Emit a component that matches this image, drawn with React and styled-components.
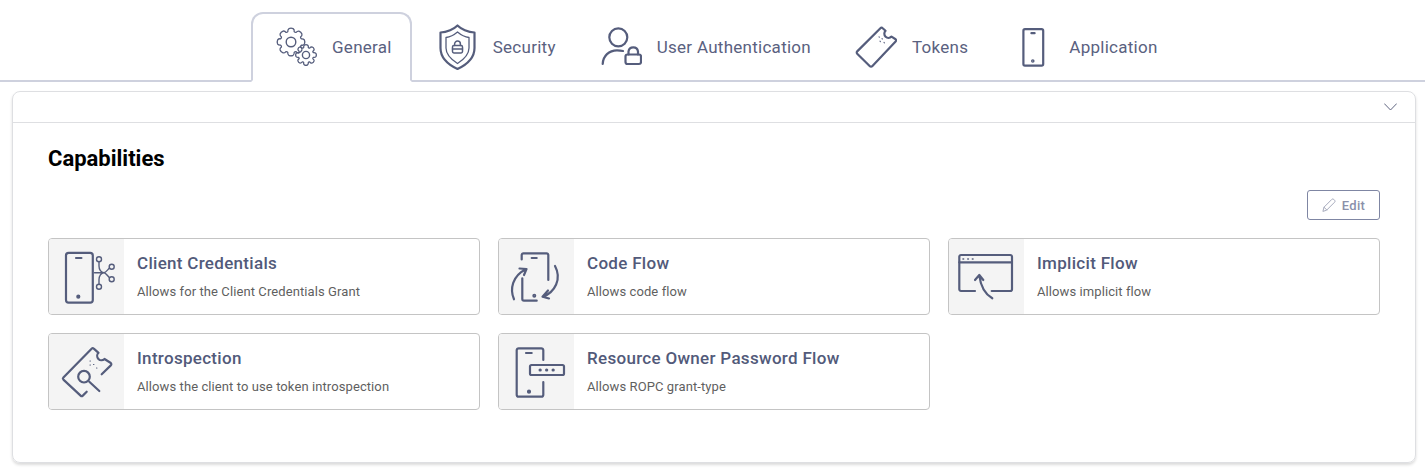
import React from "react";
import styled, { createGlobalStyle } from "styled-components";

const INK = "#555d7c";

const GlobalStyle = createGlobalStyle`
  html, body {
    margin: 0;
    padding: 0;
    background: #fff;
    font-family: Roboto, "Liberation Sans", sans-serif;
  }
`;

// wavy cog outline around a centre point
const gearPath = (cx, cy, outer, inner, teeth) => {
  const pts = [];
  const step = (Math.PI * 2) / teeth;
  for (let i = 0; i < teeth; i++) {
    const a = i * step - Math.PI / 2;
    const corner = (ang, r) =>
      `${(cx + Math.cos(ang) * r).toFixed(2)} ${(cy + Math.sin(ang) * r).toFixed(2)}`;
    pts.push(
      `${i === 0 ? "M" : "L"}${corner(a - step * 0.2, outer)}`,
      `Q${corner(a, outer + 0.8)} ${corner(a + step * 0.2, outer)}`,
      `Q${corner(a + step * 0.36, outer - 0.6)} ${corner(a + step * 0.38, inner)}`,
      `Q${corner(a + step * 0.5, inner - 0.6)} ${corner(a + step * 0.62, inner)}`,
      `Q${corner(a + step * 0.66, outer - 0.6)} ${corner(a + step * 0.8, outer)}`
    );
  }
  return pts.join(" ") + " Z";
};

const Svg = styled.svg`
  display: block;
  flex: none;
  fill: none;
  stroke: ${INK};
  stroke-linecap: round;
  stroke-linejoin: round;
`;

const TabSvg = ({ children }) => (
  <Svg width="42" height="46" viewBox="0 0 42 46" strokeWidth="2.2">
    {children}
  </Svg>
);

const CardSvg = ({ children }) => (
  <Svg width="76" height="76" viewBox="0 0 76 76" strokeWidth="2.2">
    {children}
  </Svg>
);

const GearsIcon = () => (
  <TabSvg>
    <path d={gearPath(16, 18, 13.5, 10.8, 8)} strokeWidth="1.3" />
    <circle cx="16" cy="18" r="4.8" strokeWidth="1.4" />
    <path d={gearPath(31, 31, 10, 7.8, 8)} strokeWidth="1.3" />
    <circle cx="31" cy="31" r="3.6" strokeWidth="1.4" />
  </TabSvg>
);

const ShieldIcon = () => (
  <TabSvg>
    <path d="M21.5 1.5C25 5 32 8.5 38.5 8.5V24C38.5 34 30 41 21.5 45C13 41 4.5 34 4.5 24V8.5C11 8.5 18 5 21.5 1.5Z" strokeWidth="2.2" />
    <path d="M21.5 8C25 11 29 13 33 13.5V24C33 31 27 36 21.5 39.5C16 36 10 31 10 24V13.5C14 13 18 11 21.5 8Z" strokeWidth="1.3" />
    <rect x="16.5" y="21.5" width="10" height="7.5" rx="1.4" strokeWidth="1.5" />
    <path d="M18.6 21.5V20A2.9 2.9 0 0 1 24.4 20V21.5M16.5 25H26.5" strokeWidth="1.5" />
  </TabSvg>
);

const UserLockIcon = () => (
  <TabSvg>
    <circle cx="18.3" cy="13.3" r="9" />
    <path d="M2.7 40C3 32 9 26.3 17 26.3C19 26.3 21 26.5 23 27" />
    <rect x="25.5" y="30.5" width="15.5" height="9.5" rx="2" />
    <path d="M28.5 30.5V27.5A4.8 4.8 0 0 1 38 27.5V30.5" />
  </TabSvg>
);

const TicketIcon = () => (
  <TabSvg>
    <path d="M2.2 27.4L25.4 4.2A1.6 1.6 0 0 1 27.7 4.2L30.5 6.8A4 4 0 0 0 36.5 12.6L40.6 15.2A1.6 1.6 0 0 1 40.6 17.5L17.2 42.2A1.6 1.6 0 0 1 14.9 42.2L2.2 29.7A1.6 1.6 0 0 1 2.2 27.4Z" />
    <path d="M24 12.8L24.4 13.2M27 14.6L27.4 15M25 17.2L25.4 17.6M29 18.4L29.4 18.8" strokeWidth="1.1" />
  </TabSvg>
);

const PhoneIcon = () => (
  <TabSvg>
    <rect x="11.4" y="5.2" width="19.8" height="36.4" rx="1.6" />
    <path d="M19.4 9.2H22.6" />
    <circle cx="20.8" cy="37" r="0.7" />
  </TabSvg>
);

const ClientIcon = () => (
  <CardSvg>
    <rect x="17" y="13.8" width="26.8" height="49.8" rx="2.6" />
    <path d="M27 19H32.4" />
    <circle cx="29.3" cy="57.7" r="1" />
    <g strokeWidth="1.4">
      <circle cx="50" cy="20.3" r="2.5" />
      <circle cx="62.7" cy="27.7" r="2.5" />
      <circle cx="62.7" cy="40.3" r="2.5" />
      <circle cx="50" cy="47.7" r="2.5" />
      <path d="M50 22.8V27C50 30.5 52 33.7 55 33.7H45.5M50 45.2V40.5C50 37 52 33.7 55 33.7C56.5 33.7 58 31.5 60.5 29M55 33.7C56.5 33.7 58 36 60.5 38.8" />
    </g>
  </CardSvg>
);

const CodeFlowIcon = () => (
  <CardSvg>
    <path d="M22.7 20.5V16A1.7 1.7 0 0 1 24.4 14.3H47.6A1.7 1.7 0 0 1 49.3 16V41" />
    <path d="M23.3 39.3V60A1.7 1.7 0 0 0 25 61.7H37.7" />
    <path d="M32.7 19H37.7" />
    <circle cx="35.3" cy="56.7" r="0.9" />
    <path d="M15 60.3C10.5 50 13.5 37 26.8 30.3M20.5 29.5L27.5 30L25 36" />
    <path d="M56 27C63 40 56 53 44 57.7M49 51.5L43.5 57.7L50 59.5" />
  </CardSvg>
);

const ImplicitIcon = () => (
  <CardSvg>
    <path d="M26 52H12A1.7 1.7 0 0 1 10.3 50.3V17.7A1.7 1.7 0 0 1 12 16H61.3A1.7 1.7 0 0 1 63 17.7V50.3A1.7 1.7 0 0 1 61.3 52H42.7" />
    <path d="M10.3 23.3H63" />
    <path d="M14 20H14.6M18.8 20H19.4M23.4 20H24" strokeWidth="1.6" />
    <path d="M43.3 59.3C36 55 31.5 46 30.3 36.3M26 41L30.3 36L34.3 41" />
  </CardSvg>
);

const IntrospectionIcon = () => (
  <CardSvg>
    <path d="M37.7 57.7L33.8 61.6A1.6 1.6 0 0 1 31.6 61.6L14.4 45.6A1.6 1.6 0 0 1 14.4 43.4L42.6 14.7A1.6 1.6 0 0 1 44.8 14.7L49.5 18.8A4.2 4.2 0 0 0 55.5 25L61.8 29A1.6 1.6 0 0 1 61.8 31.4L52.7 40.3" />
    <circle cx="35" cy="42.7" r="5.8" />
    <path d="M40.3 47.7L50.3 57" />
    <path d="M41 27H41.4M44.5 30.5H44.9M47.5 34H47.9M41 31H41.4" strokeWidth="1.2" />
  </CardSvg>
);

const RopcIcon = () => (
  <CardSvg>
    <path d="M44.3 26V16.3A2 2 0 0 0 42.3 14.3H19.7A2 2 0 0 0 17.7 16.3V60.7A2 2 0 0 0 19.7 62.7H42.3A2 2 0 0 0 44.3 60.7V48" />
    <path d="M27 19H32.7" />
    <circle cx="30" cy="57.7" r="1" />
    <rect x="31" y="31" width="34" height="10" rx="1.6" />
    <path d="M41 36H41.3M47.5 36H47.8M54 36H54.3" strokeWidth="3" />
  </CardSvg>
);

const PencilSvg = styled(Svg)`
  stroke: #a7abbd;
`;

const ChevronSvg = styled(Svg)`
  stroke: #5f6580;
`;

const PencilIcon = () => (
  <PencilSvg width="14" height="14" viewBox="0 0 14 14" strokeWidth="1">
    <path d="M1 13L2 9.2L9.8 1.4A1.4 1.4 0 0 1 11.8 1.4L12.6 2.2A1.4 1.4 0 0 1 12.6 4.2L4.8 12Z" />
    <path d="M2 9.2L4.8 12" />
  </PencilSvg>
);

const Page = styled.div`
  width: 1425px;
  height: 471px;
  overflow: hidden;
  background: #fff;
`;

const TabBar = styled.nav`
  display: flex;
  align-items: flex-end;
  box-sizing: border-box;
  height: 82px;
  padding-left: 251px;
  border-bottom: 2px solid #ced1de;
`;

const Tab = styled.div`
  display: flex;
  align-items: center;
  gap: 15px;
  box-sizing: border-box;
  height: 70px;
  margin-bottom: -2px;
  padding: 0 18px 0 22px;
  border: 2px solid ${(p) => (p.$active ? "#ced1de" : "transparent")};
  border-bottom: 2px solid ${(p) => (p.$active ? "#fff" : "transparent")};
  border-radius: 12px 12px 0 0;
  background: ${(p) => (p.$active ? "#fff" : "transparent")};
`;

const TabLabel = styled.span`
  color: #5a6180;
  font-size: 17px;
  letter-spacing: 0.27px;
  line-height: 20px;
  white-space: nowrap;
`;

const Panel = styled.section`
  box-sizing: border-box;
  width: 1404px;
  height: 372px;
  margin: 9px 0 0 12px;
  border: 1px solid #dedfe2;
  border-radius: 8px;
  box-shadow: 0 2px 3px rgba(0, 0, 0, 0.14);
`;

const PanelHead = styled.div`
  display: flex;
  justify-content: flex-end;
  align-items: center;
  box-sizing: border-box;
  height: 31px;
  padding-right: 18px;
  border-bottom: 1px solid #dedfe2;
`;

const PanelBody = styled.div`
  padding: 23px 35px 0;
`;

const Heading = styled.h2`
  margin: 0;
  color: #000;
  font-size: 22px;
  font-weight: 700;
  line-height: 26px;
`;

const Actions = styled.div`
  display: flex;
  justify-content: flex-end;
  margin: 18px 0;
`;

const EditButton = styled.button`
  display: flex;
  align-items: center;
  justify-content: center;
  gap: 6px;
  box-sizing: border-box;
  width: 73px;
  height: 30px;
  padding: 0;
  border: 1px solid #7f86a3;
  border-radius: 3px;
  background: #fff;
  color: #8a90aa;
  font-family: inherit;
  font-size: 13px;
  font-weight: 500;
  letter-spacing: 0.3px;
`;

const Grid = styled.div`
  display: grid;
  grid-template-columns: repeat(3, 432px);
  grid-auto-rows: 77px;
  gap: 18px;
`;

const Card = styled.div`
  display: flex;
  box-sizing: border-box;
  overflow: hidden;
  border: 1px solid #c4c4c4;
  border-radius: 4px;
`;

const IconCell = styled.div`
  flex: none;
  width: 75px;
  background: #f4f4f4;
`;

const CardText = styled.div`
  padding: 12px 0 0 13px;
`;

const CardTitle = styled.div`
  color: #525a7a;
  font-size: 17px;
  font-weight: 500;
  letter-spacing: 0.3px;
  line-height: 24px;
`;

const CardDesc = styled.div`
  margin-top: 8px;
  color: #5f5f5f;
  font-size: 13px;
  letter-spacing: 0.09px;
  line-height: 18px;
`;

const tabs = [
  { label: "General", Icon: GearsIcon, active: true },
  { label: "Security", Icon: ShieldIcon },
  { label: "User Authentication", Icon: UserLockIcon },
  { label: "Tokens", Icon: TicketIcon },
  { label: "Application", Icon: PhoneIcon },
];

const capabilities = [
  { title: "Client Credentials", desc: "Allows for the Client Credentials Grant", Icon: ClientIcon },
  { title: "Code Flow", desc: "Allows code flow", Icon: CodeFlowIcon },
  { title: "Implicit Flow", desc: "Allows implicit flow", Icon: ImplicitIcon },
  { title: "Introspection", desc: "Allows the client to use token introspection", Icon: IntrospectionIcon },
  { title: "Resource Owner Password Flow", desc: "Allows ROPC grant-type", Icon: RopcIcon },
];

const App = () => (
  <Page>
    <GlobalStyle />
    <TabBar>
      {tabs.map(({ label, Icon, active }) => (
        <Tab key={label} $active={active}>
          <Icon />
          <TabLabel>{label}</TabLabel>
        </Tab>
      ))}
    </TabBar>
    <Panel>
      <PanelHead>
        <ChevronSvg width="13" height="8" viewBox="0 0 13 8" strokeWidth="1">
          <path d="M0.5 0.8L6.5 7L12.5 0.8" />
        </ChevronSvg>
      </PanelHead>
      <PanelBody>
        <Heading>Capabilities</Heading>
        <Actions>
          <EditButton>
            <PencilIcon />
            Edit
          </EditButton>
        </Actions>
        <Grid>
          {capabilities.map(({ title, desc, Icon }) => (
            <Card key={title}>
              <IconCell>
                <Icon />
              </IconCell>
              <CardText>
                <CardTitle>{title}</CardTitle>
                <CardDesc>{desc}</CardDesc>
              </CardText>
            </Card>
          ))}
        </Grid>
      </PanelBody>
    </Panel>
  </Page>
);

export default App;
